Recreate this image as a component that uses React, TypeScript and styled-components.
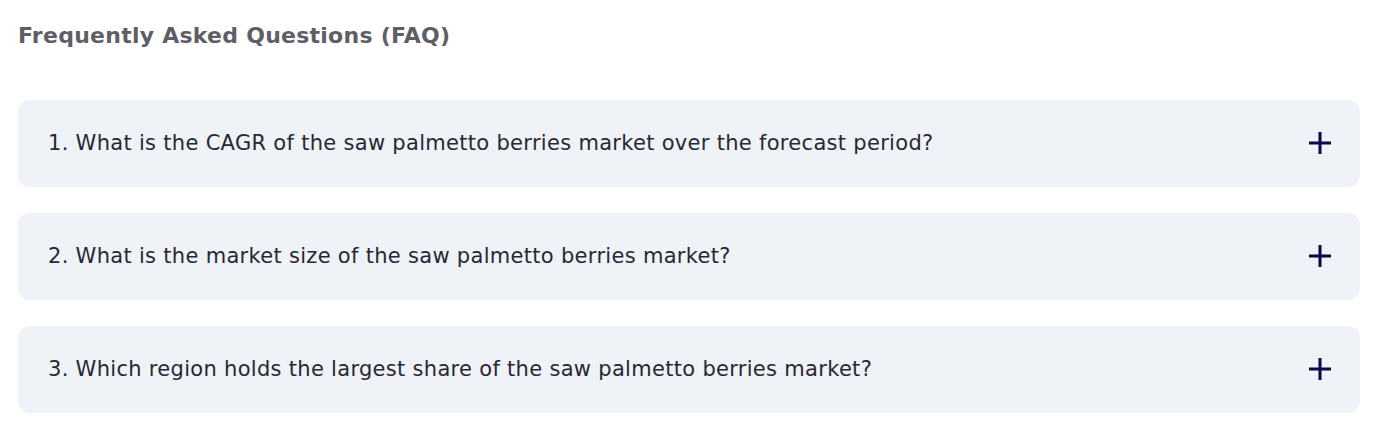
import React from 'react';
import styled, { createGlobalStyle } from 'styled-components';

const GlobalStyle = createGlobalStyle`
	html, body {
		margin: 0;
		padding: 0;
		background: #ffffff;
	}
`;

const Page = styled.section`
	padding: 22px 21px 0 18px;
	display: flex;
	flex-direction: column;
`;

const Heading = styled.h2`
	margin: 0 0 50px;
	font-family: 'DejaVu Sans', sans-serif;
	font-weight: 700;
	font-size: 22px;
	letter-spacing: 0.25px;
	line-height: 28px;
	color: #5f5e66;
`;

const List = styled.div`
	display: flex;
	flex-direction: column;
	gap: 26px;
`;

const Item = styled.button`
	display: flex;
	align-items: center;
	justify-content: space-between;
	height: 87px;
	padding: 0 29px 0 30px;
	border: none;
	border-radius: 12px;
	background: #eff2f7;
	cursor: pointer;
	text-align: left;
`;

const Question = styled.span`
	font-family: 'DejaVu Sans', sans-serif;
	font-size: 21px;
	letter-spacing: 0.3px;
	line-height: 26px;
	margin-top: -2px;
	color: #282833;
`;

const PlusMark = styled.svg`
	margin-top: -1px;
	flex-shrink: 0;
`;

const PlusIcon = () => (
	<PlusMark width="22" height="22" viewBox="0 0 22 22">
		<path d="M11 0v22M0 11h22" stroke="#0a0a4a" strokeWidth="3" />
	</PlusMark>
);

const questions = [
	'1. What is the CAGR of the saw palmetto berries market over the forecast period?',
	'2. What is the market size of the saw palmetto berries market?',
	'3. Which region holds the largest share of the saw palmetto berries market?',
];

const App: React.FC = () => (
	<>
		<GlobalStyle />
		<Page>
			<Heading>Frequently Asked Questions (FAQ)</Heading>
			<List>
				{questions.map((q) => (
					<Item key={q}>
						<Question>{q}</Question>
						<PlusIcon />
					</Item>
				))}
			</List>
		</Page>
	</>
);

export default App;
